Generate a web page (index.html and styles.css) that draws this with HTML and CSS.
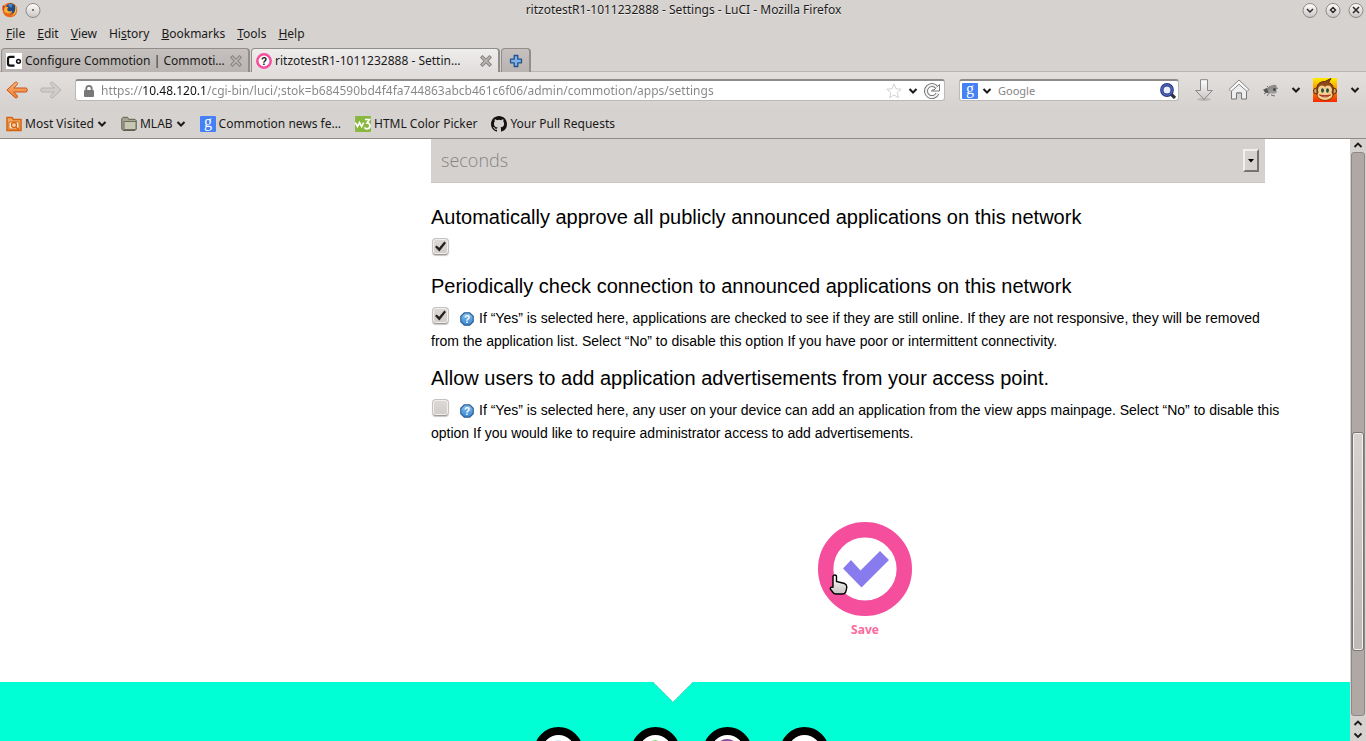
FILE: index.html
```html
<!DOCTYPE html>
<html lang="en">
<head>
<meta charset="utf-8">
<title>ritzotestR1-1011232888 - Settings - LuCI - Mozilla Firefox</title>
<link rel="stylesheet" href="styles.css">
</head>
<body>
<svg width="0" height="0" class="defs" aria-hidden="true">
  <defs>
    <linearGradient id="metal" x1="0" y1="0" x2="0" y2="1"><stop offset="0" stop-color="#fff"/><stop offset="1" stop-color="#c8c4c2"/></linearGradient>
    <linearGradient id="orange" x1="0" y1="0" x2="0" y2="1"><stop offset="0" stop-color="#fbb77a"/><stop offset="1" stop-color="#ee7a2c"/></linearGradient>
    <linearGradient id="blue" x1="0" y1="0" x2="0" y2="1"><stop offset="0" stop-color="#86c2f2"/><stop offset="1" stop-color="#3584d0"/></linearGradient>
    <linearGradient id="fire" x1="0" y1="0" x2="0" y2="1"><stop offset="0" stop-color="#ffee00"/><stop offset="1" stop-color="#f62a00"/></linearGradient>
    <symbol id="chev" viewBox="0 0 10 8"><path d="M1.500 2L5 5.500 8.500 2" fill="none" stroke="#1a1a1a" stroke-width="2"/></symbol>
    <symbol id="close" viewBox="0 0 12 12"><path d="M2.500 2.500L9.500 9.500M9.500 2.500L2.500 9.500" stroke="#85827f" stroke-width="3.600" stroke-linecap="square"/><path d="M2.500 2.500L9.500 9.500M9.500 2.500L2.500 9.500" stroke="#bab7b4" stroke-width="1.600" stroke-linecap="square"/></symbol>
    <symbol id="help" viewBox="0 0 14 14"><path d="M4.300.8h5.400l3.500 3.500v5.400l-3.500 3.500H4.300L.8 9.700V4.300z" fill="url(#blue)" stroke="#2f5f93" stroke-width="1.200"/><text x="7" y="10.800" text-anchor="middle" class="help-mark">?</text></symbol>
  </defs>
</svg>

<header class="chrome">
  <div class="titlebar">
    <svg class="i16" viewBox="0 0 16 16"><circle cx="8" cy="8" r="7.300" fill="#e8661a"/><circle cx="8.800" cy="6.600" r="5" fill="#234b86"/><path d="M6 2.500c2-1 4-.6 5.500.6-2 0-2.600 1.200-1.300 2.200-1.500.4-3-.6-4.200-2.800z" fill="#4a8fc9"/><path d="M1 4.500C3 3.500 4.500 5 6.500 5.300 5.500 6.700 4.700 7 5.500 8.300c1 1.600 3.500 1.200 5 .7-1.500 3.800-7 3.200-8.500-.5z" fill="#ffac2a"/><path d="M13 3c2.600 3.600 1.600 9-3 11.200C13 11 14 7 13 3z" fill="#ffc83c"/><path d="M1 3l2 1.500-2 4.800C.2 7 .2 5 1 3z" fill="#d0381c"/></svg>
    <button class="wm" aria-label="Menu"><svg class="i16" viewBox="0 0 16 16"><circle cx="8" cy="8.500" r="7" fill="url(#metal)" stroke="#8b8885"/><circle cx="8" cy="8" r="1" fill="#555"/></svg></button>
    <h1 class="title">ritzotestR1-1011232888 - Settings - LuCI - Mozilla Firefox</h1>
    <button class="wm" aria-label="Minimize"><svg class="i16" viewBox="0 0 16 16"><circle cx="8" cy="8.500" r="7" fill="url(#metal)" stroke="#8b8885"/><path d="M5 7l3 3 3-3" fill="none" stroke="#2b2b2b" stroke-width="1.500"/></svg></button>
    <button class="wm" aria-label="Maximize"><svg class="i16" viewBox="0 0 16 16"><circle cx="8" cy="8.500" r="7" fill="url(#metal)" stroke="#8b8885"/><path d="M8 5.500L10.500 8 8 10.500 5.500 8z" fill="none" stroke="#2b2b2b" stroke-width="1.500"/></svg></button>
    <button class="wm" aria-label="Close"><svg class="i16" viewBox="0 0 16 16"><circle cx="8" cy="8.500" r="7" fill="url(#metal)" stroke="#8b8885"/><path d="M5 5l6 6M11 5l-6 6" stroke="#2b2b2b" stroke-width="1.600"/></svg></button>
  </div>

  <nav class="menubar">
    <button><u>F</u>ile</button><button><u>E</u>dit</button><button><u>V</u>iew</button><button>Hi<u>s</u>tory</button><button><u>B</u>ookmarks</button><button><u>T</u>ools</button><button><u>H</u>elp</button>
  </nav>

  <div class="tabs">
    <div class="tab">
      <svg class="i16" viewBox="0 0 16 16"><rect width="16" height="16" fill="#fff"/><path d="M8.500 3.800H4.200Q2 3.800 2 6v4.500q0 2.200 2.200 2.200h4.300" fill="none" stroke="#111" stroke-width="2.200"/><circle cx="12.500" cy="8.300" r="1.900" fill="none" stroke="#111" stroke-width="1.500"/></svg>
      <span class="tab-text">Configure Commotion | Commoti…</span>
      <button class="wm" aria-label="Close tab"><svg class="i12"><use href="#close"/></svg></button>
    </div>
    <div class="tab active">
      <svg class="i16" viewBox="0 0 16 16"><circle cx="8" cy="8" r="6.700" fill="#fff" stroke="#f54e9c" stroke-width="2.500"/><text x="8" y="11.500" text-anchor="middle" class="fav-mark">?</text></svg>
      <span class="tab-text">ritzotestR1-1011232888 - Settin…</span>
      <button class="wm" aria-label="Close tab"><svg class="i12"><use href="#close"/></svg></button>
    </div>
    <button class="newtab" aria-label="New tab"><svg class="i14" viewBox="0 0 14 14"><path d="M5.200 1.500h3.600v3.700h3.700v3.600H8.800v3.700H5.200V8.800H1.500V5.200h3.700z" fill="#7fb2e6" stroke="#23518f" stroke-width="1.300" stroke-linejoin="round"/></svg></button>
  </div>

  <div class="navbar">
    <button class="wm" aria-label="Back"><svg class="i22" viewBox="0 0 22 18"><path d="M9 1.500q1.500-1 2.300.2.700 1-.3 2L7.800 7H20q1.300.3 1.300 2T20 11H7.800l3.200 3.300q1 1 .3 2-1 1.200-2.300.2L.9 9z" fill="url(#orange)" stroke="#c4551c"/></svg></button>
    <button class="wm" aria-label="Forward"><svg class="i22 fwd" viewBox="0 0 22 18"><path d="M13 1.500q-1.500-1-2.300.2-.7 1 .3 2L14.200 7H2Q.7 7.300.7 9T2 11h12.200L11 14.300q-1 1-.3 2 1 1.200 2.300.2L21.100 9z" fill="#cfccca" stroke="#b5b2b0"/></svg></button>
    <div class="box urlbox">
      <svg class="lock" viewBox="0 0 12 14"><path d="M3.300 7V4.500a2.700 2.700 0 0 1 5.400 0V7" fill="none" stroke="#777" stroke-width="1.800"/><rect x="1" y="6" width="10" height="7" rx="1" fill="#777"/></svg>
      <input class="url" aria-label="Address" value="https://10.48.120.1/cgi-bin/luci/;stok=b684590bd4f4fa744863abcb461c6f06/admin/commotion/apps/settings">
      <svg class="i16" viewBox="0 0 16 16"><path d="M8 1l2 4.800 5.200.4-4 3.400 1.300 5.100L8 12l-4.500 2.700 1.300-5.100-4-3.400L6 5.800z" fill="#fff" stroke="#d4d2d0"/></svg>
      <svg class="chev"><use href="#chev"/></svg>
      <svg class="i16" viewBox="0 0 16 16"><path d="M12.800 4.500A6 6 0 1 0 13.500 10.500" fill="none" stroke="#777" stroke-width="4"/><path d="M9 8h6.500V1.500z" fill="#fff" stroke="#777"/><path d="M12.800 4.500A6 6 0 1 0 13.500 10.500" fill="none" stroke="#f3f3f3" stroke-width="2"/><path d="M8 9V7h2" fill="none" stroke="#777"/></svg>
    </div>
    <div class="box searchbox">
      <svg class="i16" viewBox="0 0 16 16"><rect width="16" height="16" rx="1" fill="#4580f5"/><text x="8" y="11" text-anchor="middle" class="g-mark">g</text></svg>
      <svg class="chev"><use href="#chev"/></svg>
      <input class="search" aria-label="Search" placeholder="Google">
      <svg class="i16" viewBox="0 0 16 16"><path d="M11 11l4 4" stroke="#333" stroke-width="3.200"/><circle cx="7" cy="7" r="5.200" fill="#e9eef9" stroke="#25357e" stroke-width="3.400"/><circle cx="7" cy="7" r="5.200" fill="none" stroke="#4c65bd" stroke-width="1.600"/></svg>
    </div>
    <div class="tools">
      <button class="wm" aria-label="Downloads"><svg class="i22" viewBox="0 0 22 22"><ellipse cx="11" cy="20.500" rx="7" ry="1.500" fill="#bbb7b5"/><path d="M7.500.7h7v10.800h4.800L11 20.500l-8.300-9h4.800z" fill="url(#metal)" stroke="#85878a"/></svg></button>
      <button class="wm" aria-label="Home"><svg class="i22" viewBox="0 0 22 22"><path d="M3.500 10.500V20h5v-6h5v6h5v-9.500L11 4z" fill="#eee" stroke="#777"/><path d="M11 1L1 10.500 3 12.500l8-7.200 8 7.200 2-2z" fill="#f8f8f8" stroke="#888"/><path d="M8.500 20v-6h5v6" fill="#d6d2d0" stroke="#777"/></svg></button>
      <button class="wm" aria-label="Fly"><svg class="i16" viewBox="0 0 16 14"><path d="M1 7l5-1M2 11l5-3M5 13l3-4M14 6l2-1M9 12l4 1M5 3l2 2" stroke="#555" stroke-width=".8"/><ellipse cx="6" cy="7.500" rx="4" ry="2.500" fill="#555"/><ellipse cx="10" cy="5" rx="5" ry="2.600" fill="#8d8d8d" transform="rotate(-20 10 5)"/><ellipse cx="10.500" cy="8.500" rx="4.500" ry="2" fill="#999"/><circle cx="12.500" cy="6.500" r="1.500" fill="#444"/></svg></button>
      <svg class="chev"><use href="#chev"/></svg>
      <button class="wm" aria-label="Greasemonkey"><svg class="i24" viewBox="0 0 24 24"><rect width="24" height="24" fill="url(#fire)"/><circle cx="3.500" cy="13" r="3" fill="#dca05a" stroke="#5b2a0c"/><circle cx="20.500" cy="13" r="3" fill="#dca05a" stroke="#5b2a0c"/><path d="M4 13C3 6 7 3.500 12 3.500l6-3-2.500 4C20 6 21 10 20 14q1 8-8 8T4 13z" fill="#8e4a18" stroke="#5b2a0c"/><ellipse cx="9" cy="12" rx="4" ry="4.500" fill="#f6cf8e"/><ellipse cx="15" cy="12" rx="4" ry="4.500" fill="#f6cf8e"/><ellipse cx="12" cy="17" rx="7.500" ry="5" fill="#f6cf8e"/><ellipse cx="9.500" cy="12.500" rx="1.400" ry="2.200" fill="#185044"/><ellipse cx="14.500" cy="12.500" rx="1.400" ry="2.200" fill="#185044"/><path d="M6.500 17q5.500 4 11 0-5.500 1.500-11 0z" fill="#fff" stroke="#a52a1a"/></svg></button>
      <svg class="chev"><use href="#chev"/></svg>
    </div>
  </div>

  <nav class="bookmarks">
    <button class="bm"><svg class="i16" viewBox="0 0 16 16"><path d="M1 14.500V1.500h5l1.500 2H15v11z" fill="#f0a860" stroke="#d56410" stroke-width="1.500"/><path d="M3 6h10v7H3z" fill="#fff3e4" stroke="#d56410"/><circle cx="8" cy="9" r="2.500" fill="#fbd2a5" stroke="#d56410" stroke-width="1.300"/><path d="M10 11l3 3" stroke="#d56410" stroke-width="1.500"/></svg><span>Most Visited</span><svg class="chev"><use href="#chev"/></svg></button>
    <button class="bm"><svg class="i16" viewBox="0 0 16 16"><path d="M.8 13V2.500L2 1.300h4.500l1.300 2H14l1.200 1.200V13L14 14.500H2z" fill="#a5a690" stroke="#5f6152"/><path d="M3 5.500h12v8H3z" fill="#c6c8b4" stroke="#6c6e5d"/></svg><span>MLAB</span><svg class="chev"><use href="#chev"/></svg></button>
    <a class="bm" href="#"><svg class="i16" viewBox="0 0 16 16"><rect width="16" height="16" rx="1" fill="#4580f5"/><text x="8" y="11" text-anchor="middle" class="g-mark">g</text></svg><span>Commotion news fe…</span></a>
    <a class="bm" href="#"><svg class="i16" viewBox="0 0 16 16"><rect width="16" height="16" rx="1" fill="#88b83f"/><path d="M0 6.500l2.500 4 2-4 2.200 4 2-4" fill="none" stroke="#fff" stroke-width="1.600"/><path d="M10 3.500h4.500L12 7q3 .3 3 2.800 0 3-3 3-1.800 0-2.500-1.500" fill="none" stroke="#fff" stroke-width="1.700"/></svg><span>HTML Color Picker</span></a>
    <a class="bm" href="#"><svg class="i16" viewBox="0 0 16 16"><path fill="#15110f" d="M8 0C3.580 0 0 3.580 0 8c0 3.540 2.290 6.530 5.470 7.590.4.070.55-.17.55-.38 0-.19-.01-.82-.01-1.490-2.010.37-2.530-.49-2.690-.94-.09-.23-.48-.94-.82-1.130-.28-.15-.68-.52-.01-.53.63-.01 1.080.58 1.230.82.72 1.210 1.870.87 2.330.66.07-.52.28-.87.51-1.070-1.780-.2-3.640-.89-3.640-3.950 0-.87.31-1.590.82-2.150-.08-.2-.36-1.020.08-2.120 0 0 .67-.21 2.200.82a7.600 7.600 0 0 1 4 0c1.530-1.040 2.200-.82 2.200-.82.44 1.100.16 1.920.08 2.120.51.56.82 1.270.82 2.150 0 3.070-1.870 3.750-3.650 3.950.29.25.54.73.54 1.480 0 1.070-.01 1.930-.01 2.200 0 .21.15.46.55.38A8 8 0 0 0 16 8c0-4.420-3.580-8-8-8z"/></svg><span>Your Pull Requests</span></a>
  </nav>
</header>

<div class="viewport">
  <div class="page">
    <main class="content">
      <div class="select-wrap">
        <select class="unit" aria-label="Time unit"><option>seconds</option></select>
        <span class="drop"><svg viewBox="0 0 6 4"><path d="M0 0h6L3 3.500z"/></svg></span>
      </div>

      <div class="field">
        <label for="approve" class="field-title">Automatically approve all publicly announced applications on this network</label>
        <div class="field-body"><input type="checkbox" id="approve" class="check" checked></div>
      </div>
      <div class="field">
        <label for="periodic" class="field-title">Periodically check connection to announced applications on this network</label>
        <div class="field-body"><input type="checkbox" id="periodic" class="check" checked><svg class="help"><use href="#help"/></svg>If “Yes” is selected here, applications are checked to see if they are still online. If they are not responsive, they will be removed<br>from the application list. Select “No” to disable this option If you have poor or intermittent connectivity.</div>
      </div>
      <div class="field">
        <label for="allow" class="field-title">Allow users to add application advertisements from your access point.</label>
        <div class="field-body"><input type="checkbox" id="allow" class="check"><svg class="help"><use href="#help"/></svg>If “Yes” is selected here, any user on your device can add an application from the view apps mainpage. Select “No” to disable this option If you would like to require administrator access to add advertisements.</div>
      </div>

      <button class="save">
        <svg class="save-icon" viewBox="0 0 94 94"><circle cx="47" cy="47" r="39.300" fill="#fff" stroke="#f54e9c" stroke-width="15.400"/><path d="M25 46.500l8-8.500 9.500 10.500L62 29l9 9-27.500 27.500z" fill="#887bee"/></svg>
        <span>Save</span>
        <svg class="pointer" viewBox="0 0 19 21"><path d="M4 13V3q0-2 1.800-2T7.500 3v4.500l8 2q2.300 1 2.300 3.500-.3 3-1.300 5.500-1 1.500-3 1.500H7q-2 0-3-1.500L1.300 15q-.5-2 2.700-2z" fill="url(#metal)" stroke="#000" stroke-width="1.400"/></svg>
      </button>
    </main>
    <footer class="footer">
      <svg class="notch" viewBox="0 0 40 20"><path d="M0 0h40L20 20z" fill="#fff"/><path d="M0 0l20 20L40 0" fill="none" stroke="#555" stroke-width=".5" stroke-dasharray="1 1"/></svg>
      <div class="rings">
        <a class="ring first" href="#" aria-label="Home"><i class="dot pale"></i></a>
        <a class="ring" href="#" aria-label="Network"><i class="dot green"></i></a>
        <a class="ring third" href="#" aria-label="Apps"><i class="dot violet"></i></a>
        <a class="ring" href="#" aria-label="Help"></a>
      </div>
    </footer>
  </div>
  <div class="scrollbar">
    <svg class="arrow" viewBox="0 0 12 12"><path d="M2.500 8L6 4.500 9.500 8" fill="none" stroke="#1a1a1a" stroke-width="1.800"/></svg>
    <div class="track"><div class="thumb"></div></div>
    <svg class="arrow" viewBox="0 0 12 12"><path d="M2.500 8L6 4.500 9.500 8" fill="none" stroke="#1a1a1a" stroke-width="1.800"/></svg>
    <svg class="arrow" viewBox="0 0 12 12"><path d="M2.500 4.500L6 8l3.500-3.500" fill="none" stroke="#1a1a1a" stroke-width="1.800"/></svg>
  </div>
</div>
</body>
</html>
```
FILE: styles.css
```css
* { box-sizing: border-box; }
body {
  margin: 0;
  height: 100vh;
  display: flex;
  flex-direction: column;
  overflow: hidden;
  background: #fff;
  color: #1a1a1a;
  font: 12px/16px "Noto Sans", sans-serif;
}
button { font: inherit; color: inherit; border: 0; background: none; padding: 0; }
a { color: inherit; text-decoration: none; }
svg { flex: none; display: block; }
.defs { position: absolute; }
.i12 { width: 12px; height: 12px; }
.i14 { width: 14px; height: 14px; }
.i16 { width: 16px; height: 16px; }
.i22 { width: 22px; height: 22px; }
.i24 { width: 24px; height: 24px; }
.chev { width: 10px; height: 8px; }
.wm { flex: none; display: block; }
.help-mark { font: bold 10px "Liberation Sans", sans-serif; fill: #fff; }
.fav-mark { font: bold 10px "Liberation Sans", sans-serif; fill: #111; }
.g-mark { font: 16px "Liberation Serif", serif; fill: #fff; }
.i16:has(.g-mark) { overflow: visible; }

.chrome { background: #d6d2cf; border-bottom: 1px solid #8f8b88; }
.titlebar { height: 22px; padding: 0 2px 2px; display: flex; align-items: center; gap: 7px; }
.title { flex: 1; margin: 0; padding-left: 24px; text-align: center; font-size: 12px; font-weight: 400; text-shadow: 0 1px 0 #f2f0ee; }
.menubar { height: 24px; padding: 0 6px; display: flex; align-items: center; gap: 12px; }

.tabs { height: 26px; padding: 2px 1px 0; display: flex; gap: 1px; border-bottom: 1px solid #b9b5b3; }
.tab, .newtab {
  height: 24px;
  border: 1px solid #918d8a;
  border-width: 1px 2px 0 1px;
  border-radius: 4px 4px 0 0;
  background: linear-gradient(#c6c1be, #b9b4b1);
  display: flex;
  align-items: center;
}
.tab { width: 249px; padding: 0 6px 0 4px; gap: 3px; }
.tab.active { background: linear-gradient(#efedec, #e1dedd); }
.tab-text { flex: 1; white-space: nowrap; overflow: hidden; }
.newtab { width: 30px; justify-content: center; }

.navbar { height: 36px; padding: 0 6px; display: flex; align-items: center; background: linear-gradient(#e2dfdd, #d6d2cf); }
.fwd { margin: 0 13px 0 12px; }
.box { height: 22px; background: #fff; border: 1px solid #bcb8b6; border-top: 2px solid #8f8b88; border-radius: 3px; display: flex; align-items: center; }
.urlbox { flex: 1; padding: 0 4px 0 7px; gap: 6px; }
.lock { width: 12px; height: 14px; }
input { font: inherit; border: 0; outline: 0; padding: 0; margin: 0; min-width: 0; }
.url {
  flex: 1;
  color: transparent;
  background: linear-gradient(90deg, #858585 42px, #111 42px 106px, #858585 106px);
  background-clip: text;
}
.searchbox { width: 220px; margin-left: 14px; padding: 0 2px; gap: 4px; }
.search { flex: 1; padding-left: 2px; background: none; font-size: 11px; }
.search::placeholder { color: #858585; opacity: 1; }
.tools { width: 181px; padding-left: 14px; display: flex; align-items: center; justify-content: space-between; }

.bookmarks { height: 30px; padding: 1px 6px 0; display: flex; align-items: center; gap: 14px; }
.bm { display: flex; align-items: center; gap: 3px; white-space: nowrap; }

.viewport { flex: 1; min-height: 0; display: flex; }
.page { flex: 1; min-width: 0; display: flex; flex-direction: column; overflow: hidden; }
.content { flex: 1; padding: 0 51px 0 431px; color: #000; font-family: "Liberation Sans", sans-serif; }
.select-wrap { position: relative; margin: 0 34px 19px 0; }
.unit {
  display: block;
  width: 100%;
  height: 44px;
  padding: 0 10px 2px;
  appearance: none;
  border: 0;
  border-bottom: 1px solid #c9c6c4;
  border-radius: 0;
  background: #d5d1ce;
  color: #858585;
  font: 300 18px "Open Sans", sans-serif;
}
.drop {
  position: absolute;
  right: 6px;
  top: 10px;
  width: 16px;
  height: 23px;
  display: flex;
  align-items: center;
  justify-content: center;
  background: #d6d2cf;
  border: 2px solid;
  border-color: #f2f0ee #767371 #767371 #f2f0ee;
}
.drop svg { width: 6px; height: 4px; }
.field { margin-bottom: 10px; }
.field-title { display: block; margin-bottom: 6px; font-size: 20px; line-height: 30px; }
.field-body { min-height: 23px; font-size: 14px; line-height: 23px; }
.check {
  appearance: none;
  width: 17px;
  height: 17px;
  margin: 0 11px 0 1px;
  vertical-align: -1px;
  border: 1px solid #c4c1bf;
  border-bottom-color: #9f9b98;
  border-radius: 4px;
  background: linear-gradient(#dcd9d7, #d0ccca);
  box-shadow: inset 0 0 0 1px #f2f0ee, 0 1px 1px #c9c6c4;
}
.check:checked::after {
  content: "";
  display: block;
  width: 11px;
  height: 11px;
  margin: 2px;
  background: #222;
  clip-path: polygon(0 55%, 15% 42%, 38% 62%, 85% 5%, 100% 18%, 40% 95%);
}
.help { display: inline-block; width: 14px; height: 14px; margin-right: 5px; vertical-align: -3px; }
.save {
  position: relative;
  display: block;
  margin: 77px auto 0;
  color: #fb6a9d;
  font: bold 12px/16px "Noto Sans", sans-serif;
}
.save-icon { width: 94px; height: 94px; margin-bottom: 6px; }
.pointer { position: absolute; left: 11px; top: 52px; width: 19px; height: 21px; }

.footer { height: 59px; overflow: hidden; background: #00ffd4; display: flex; flex-direction: column; align-items: center; }
.notch { width: 40px; height: 20px; margin-right: 4px; }
.rings { display: flex; margin: 25px 0 0 12px; gap: 28px; }
.ring { flex: none; width: 49px; height: 49px; border: 8px solid #000; border-radius: 50%; background: #fff; display: flex; justify-content: center; }
.ring.first { margin-right: 20px; }
.ring.third { margin-left: -5px; }
.dot { width: 10px; height: 10px; margin-top: 5px; border-radius: 50%; }
.dot.pale { background: #cfe6fa; }
.dot.green { background: #7ee07a; }
.dot.violet { background: #8a4a9e; width: 24px; height: 24px; margin-top: 4px; }

.scrollbar { width: 16px; padding: 0 1px 0 1px; background: #d6d2cf; display: flex; flex-direction: column; align-items: center; }
.arrow { width: 12px; height: 12px; }
.track { flex: 1; align-self: stretch; margin: 1px 0; padding-top: 279px; border: 1px solid #8f8886; border-radius: 3px; background: #b0a8a5; }
.thumb { height: 219px; border: 1px solid #7a7573; border-radius: 3px; box-shadow: inset 0 0 0 1px #f2f0ee; background: linear-gradient(#d6d2cf, #bdb9b7); }
```
